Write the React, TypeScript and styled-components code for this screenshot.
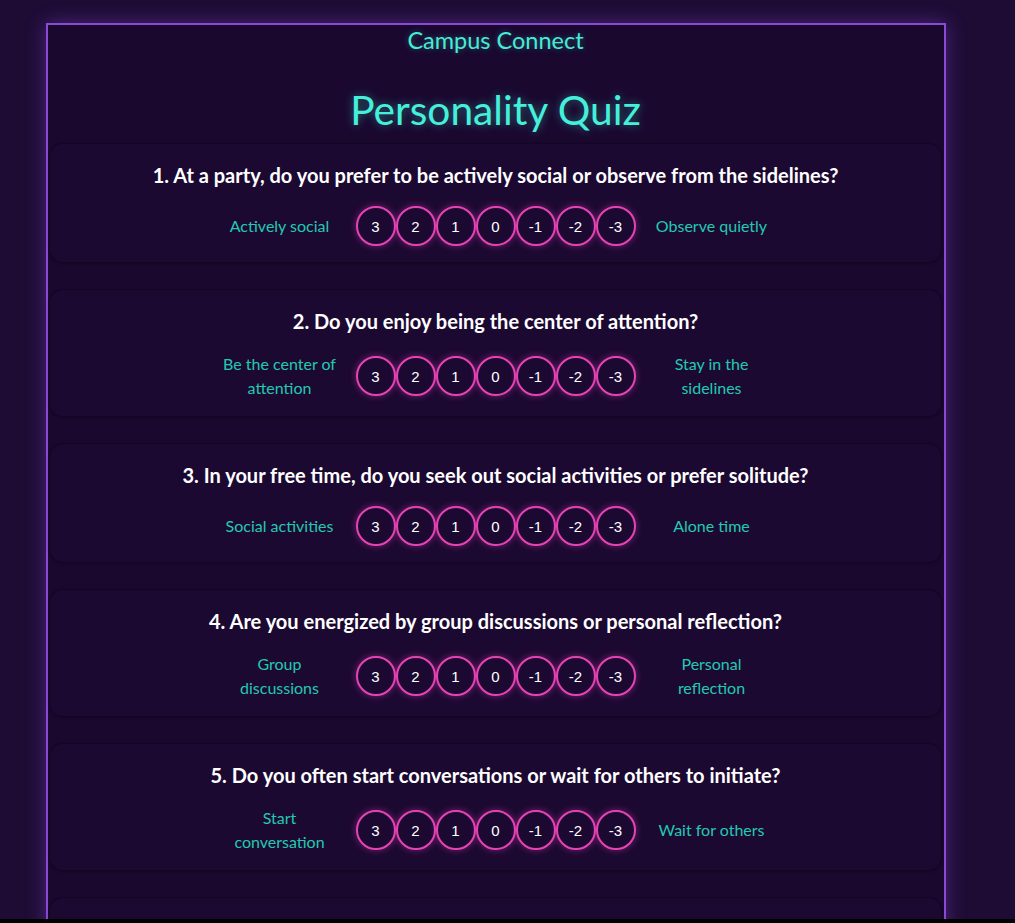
import React from "react";
import styled, { createGlobalStyle } from "styled-components";

const GlobalStyle = createGlobalStyle`
  html {
    margin: 0;
    padding: 0;
    background: #000000;
  }
  body {
    margin: 0;
    padding: 0;
    height: 919px;
    overflow: hidden;
    background: #1e0c35;
    font-family: Lato, "Noto Sans", sans-serif;
  }
`;

const Page = styled.div`
  padding: 23px 0 0 46px;
  box-sizing: border-box;
`;

const Container = styled.main`
  width: 900px;
  box-sizing: border-box;
  border: 2px solid #8a4ad6;
  border-bottom: none;
  background: #1a082f;
  box-shadow: 0 0 18px rgba(130, 70, 210, 0.45);
  padding: 2px 2px 40px 1px;
  min-height: 1100px;
`;

const Brand = styled.div`
  text-align: center;
  color: #45ecd6;
  font-size: 23.5px;
  line-height: 27px;
  text-shadow: 0 0 6px rgba(64, 240, 216, 0.35);
`;

const Title = styled.h1`
  margin: 32px 0 9px;
  text-align: center;
  font-weight: 400;
  font-size: 40.7px;
  line-height: 48px;
  color: #45f0da;
  text-shadow: 0 0 10px rgba(64, 240, 216, 0.45);
`;

const Questions = styled.div`
  display: flex;
  flex-direction: column;
  gap: 26px;
`;

const Card = styled.section`
  background: #1c0932;
  border: 1px solid rgba(8, 2, 18, 0.4);
  border-radius: 14px;
  padding: 19px 20px 16px;
  box-shadow: 0 1px 3px rgba(0, 0, 0, 0.2);
`;

const Question = styled.h3`
  margin: 0 0 19px;
  text-align: center;
  color: #ffffff;
  font-weight: 700;
  font-size: 20px;
  line-height: 24px;
`;

const Scale = styled.div`
  display: flex;
  justify-content: center;
  align-items: center;
`;

const Label = styled.span`
  width: 120px;
  margin: 0 16px;
  text-align: center;
  color: #22c9b1;
  font-size: 16px;
  line-height: 24px;
`;

const Options = styled.div`
  display: flex;
`;

const Circle = styled.button`
  width: 40px;
  height: 40px;
  padding: 0;
  border-radius: 50%;
  border: 2px solid #e543b4;
  background: #1c0932;
  color: #ffffff;
  font-family: "Liberation Sans", Arial, sans-serif;
  font-size: 15px;
  box-shadow: 0 0 7px rgba(229, 67, 180, 0.45);
  cursor: pointer;
`;

const values = [3, 2, 1, 0, -1, -2, -3];

const questions = [
  {
    q: "1. At a party, do you prefer to be actively social or observe from the sidelines?",
    left: "Actively social",
    right: "Observe quietly",
  },
  {
    q: "2. Do you enjoy being the center of attention?",
    left: "Be the center of attention",
    right: "Stay in the sidelines",
  },
  {
    q: "3. In your free time, do you seek out social activities or prefer solitude?",
    left: "Social activities",
    right: "Alone time",
  },
  {
    q: "4. Are you energized by group discussions or personal reflection?",
    left: "Group discussions",
    right: "Personal reflection",
  },
  {
    q: "5. Do you often start conversations or wait for others to initiate?",
    left: "Start conversation",
    right: "Wait for others",
  },
  {
    q: "6. Do you prefer working in teams or working independently?",
    left: "Teamwork",
    right: "Independent work",
  },
];

export default function App() {
  return (
    <>
      <GlobalStyle />
      <Page>
        <Container>
          <Brand>Campus Connect</Brand>
          <Title>Personality Quiz</Title>
          <Questions>
            {questions.map((item) => (
              <Card key={item.q}>
                <Question>{item.q}</Question>
                <Scale>
                  <Label>{item.left}</Label>
                  <Options>
                    {values.map((v) => (
                      <Circle key={v}>{v}</Circle>
                    ))}
                  </Options>
                  <Label>{item.right}</Label>
                </Scale>
              </Card>
            ))}
          </Questions>
        </Container>
      </Page>
    </>
  );
}
